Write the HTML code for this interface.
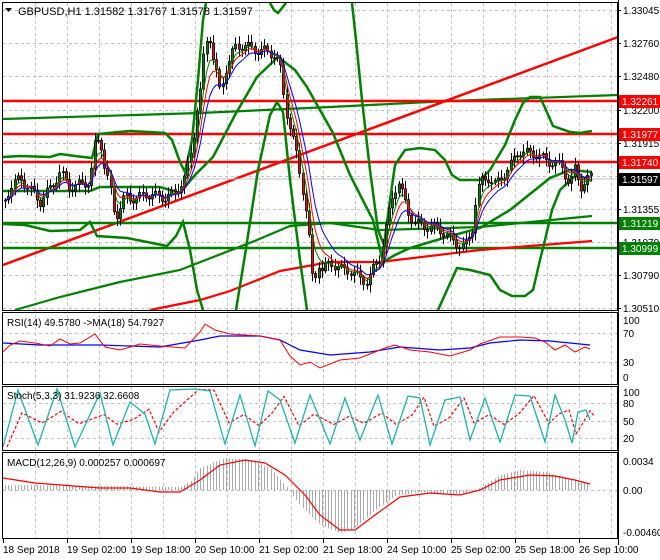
<!DOCTYPE html>
<html><head><meta charset="utf-8">
<style>
html,body{margin:0;padding:0;background:#fff;}
svg{display:block;font-family:"Liberation Sans",sans-serif;}
</style></head>
<body>
<div id="wrap"></div>
<script>
(function(){
var G='#008000',R='#ff0000';
var out=[];
function P(s){out.push(s);}
function f(n){return (Math.round(n*10)/10).toString();}
function pl(pts,c,w,extra){P('<polyline fill="none" stroke="'+c+'" stroke-width="'+w+'" '+(extra||'')+' points="'+pts.map(function(q){return f(q[0])+','+f(q[1]);}).join(' ')+'"/>');}
P('<svg width="660" height="560" viewBox="0 0 660 560" xmlns="http://www.w3.org/2000/svg"><rect width="660" height="560" fill="#fff"/>');
var gd='';
for(var gx=35;gx<618;gx+=32){gd+='M'+(gx+.5)+' 3V538';}
[10,43,76,110,143,176,209,242,275,308,333,362,403,421,438,490].forEach(function(y){gd+='M3 '+(y+.5)+'H617';});
P('<path d="'+gd+'" stroke="#c0c0c0" stroke-dasharray="3,3" stroke-width="1" fill="none"/>');
pl([[3,119],[200,113],[330,107],[450,101],[618,95]],G,2.2);
pl([[3,265],[618,37]],R,2.5);
[[101,R],[134,R],[162,R],[223,G],[248,G]].forEach(function(a){pl([[3,a[0]],[618,a[0]]],a[1],2.5);});
pl([[3,179],[618,179]],'#c0c0c0',1);
pl([[15,310],[60,297],[120,282],[180,270],[257,240],[290,226],[330,223],[380,230],[480,227],[592,216]],G,2.2);
pl([[150,310],[200,300],[230,291],[280,271],[330,262],[380,262],[480,250],[592,241]],R,2.2);
pl([[3,157],[20,156],[50,157],[60,154],[75,156],[92,158],[98,134],[130,131],[165,133],[172,140],[180,162],[185,172],[192,140],[198,80],[203,20],[206,3]],G,2.5);
pl([[270,3],[274,10],[278,13],[282,8],[286,3]],G,2.5);
pl([[352,3],[356,40],[362,100],[370,170],[378,230],[384,245],[390,200],[395,165],[405,150],[420,148],[435,150],[445,160],[452,175],[460,180],[480,180],[490,170],[505,145],[515,120],[523,103],[530,97],[540,97],[546,110],[553,126],[570,132],[580,133],[592,131]],G,2.5);
pl([[3,191],[90,191],[100,187],[160,187],[180,193],[195,175],[213,157],[235,115],[257,77],[278,57],[295,70],[307,87],[320,110],[333,133],[350,175],[373,220],[383,262],[395,255],[410,248],[447,237],[480,228],[510,210],[550,178],[570,170],[592,172]],G,2.5);
pl([[3,224],[25,225],[50,231],[80,230],[90,222],[97,236],[127,238],[167,246],[176,236],[183,222],[190,250],[197,290],[203,310]],G,2.5);
pl([[236,310],[245,255],[258,170],[270,115],[277,102],[283,112],[290,180],[300,260],[307,310]],G,2.5);
pl([[438,310],[447,290],[457,268],[470,270],[490,275],[500,290],[512,296],[525,296],[533,290],[540,260],[545,240],[552,210],[560,190],[575,176],[585,178],[592,181]],G,2.5);
var kp=[[5,200],[10,185],[20,175],[30,190],[40,205],[50,190],[60,170],[70,185],[80,185],[90,185],[95,145],[100,140],[105,170],[110,185],[115,215],[120,205],[125,195],[130,200],[140,200],[150,195],[160,195],[175,192],[185,180],[192,150],[197,110],[200,95],[205,40],[210,35],[213,55],[217,75],[220,92],[225,70],[230,60],[235,50],[245,48],[255,48],[265,48],[275,55],[280,70],[285,110],[290,130],[295,150],[300,175],[305,200],[310,245],[313,285],[318,260],[322,270],[330,265],[340,272],[350,270],[360,275],[368,280],[375,265],[380,260],[385,235],[392,200],[398,180],[403,195],[408,210],[415,220],[425,228],[440,232],[455,240],[465,245],[472,230],[476,200],[480,185],[488,180],[495,185],[505,170],[512,160],[518,150],[525,155],[535,157],[545,160],[555,160],[562,165],[570,185],[575,170],[580,190],[585,185],[590,178]];
function interp(x){for(var j=0;j<kp.length-1;j++){if(x>=kp[j][0]&&x<=kp[j+1][0]){var t=(x-kp[j][0])/(kp[j+1][0]-kp[j][0]);return kp[j][1]+t*(kp[j+1][1]-kp[j][1]);}}return kp[kp.length-1][1];}
var xs=[],closes=[];
for(var k=0;k<184;k++){var cx=5+k*3.2;xs.push(cx);closes.push(interp(cx)+Math.sin(k*1.3)*5+Math.sin(k*0.41)*3);}
var wick='',gb='',rb='';
for(var k=0;k<xs.length;k++){var o=(k==0?200:closes[k-1]),c=closes[k],bx=Math.round(xs[k]);
var bt=Math.min(o,c),bb=Math.max(o,c);
var hi=bt-2-Math.abs(Math.sin(k*2.3))*6,lo=bb+2+Math.abs(Math.cos(k*1.9))*6;
wick+='M'+(bx+.5)+' '+f(hi)+'V'+f(lo);
var h=Math.max(bb-bt,1);
var r='M'+(bx-.5)+' '+f(bt)+'h2v'+f(h)+'h-2z';
if(c<o)gb+=r;else rb+=r;}
P('<path d="'+wick+'" stroke="#000" stroke-width="1" fill="none"/>');
P('<path d="'+gb+'" fill="#008000" stroke="#000" stroke-width="0.8"/>');
P('<path d="'+rb+'" fill="#ff0000" stroke="#000" stroke-width="0.8"/>');
function ema(a,n){var kk=2/(n+1),r=[],v=a[0];for(var j=0;j<a.length;j++){v=a[j]*kk+v*(1-kk);r.push([xs[j],v]);}return r;}
pl(ema(closes,4),G,1);
pl(ema(closes,6),R,1);
pl(ema(closes,9),'#0000ff',1);
pl([[3,343],[40,345],[100,345],[160,347],[200,340],[220,336],[260,336],[280,340],[300,350],[330,355],[370,352],[400,347],[440,350],[470,348],[490,343],[520,340],[550,341],[590,345]],'#0000ff',1.2);
pl([[3,352],[10,345],[20,341],[35,343],[50,346],[60,339],[70,344],[80,343],[95,334],[105,347],[120,350],[140,344],[160,346],[185,348],[200,332],[205,324],[215,330],[230,334],[260,336],[280,340],[290,356],[300,365],[310,362],[320,368],[340,360],[360,358],[375,352],[385,348],[395,345],[410,350],[430,352],[450,356],[470,350],[480,344],[500,337],[520,337],[535,338],[545,342],[555,350],[565,345],[575,352],[585,347],[590,349]],R,1);
var st=[[3,447],[18,390],[38,445],[57,389],[75,447],[100,393],[113,445],[130,402],[145,414],[155,444],[170,390],[195,389],[210,391],[225,444],[240,395],[255,446],[268,391],[280,400],[295,443],[310,395],[330,444],[345,398],[360,440],[378,395],[392,444],[408,396],[420,398],[430,445],[445,400],[460,397],[470,440],[485,398],[500,442],[515,395],[530,396],[545,442],[555,395],[565,420],[572,443],[578,412],[586,410],[590,420]];
var sd=st.map(function(p,j){var q=st[Math.max(0,j-1)];return [p[0]+4,p[1]*0.6+q[1]*0.4];});
pl(sd,R,1.2,'stroke-dasharray="3,2"');
pl(st,'#20b2aa',1.3);
var hp=[[3,485],[100,486],[180,487],[190,482],[200,468],[225,458],[250,460],[270,468],[285,485],[300,505],[320,525],[340,533],[355,528],[375,510],[395,496],[420,492],[460,494],[480,488],[500,475],[520,470],[545,472],[565,478],[590,483]];
function hv(x){for(var j=0;j<hp.length-1;j++){if(x>=hp[j][0]&&x<=hp[j+1][0]){var t=(x-hp[j][0])/(hp[j+1][0]-hp[j][0]);return hp[j][1]+t*(hp[j+1][1]-hp[j][1]);}}return 490;}
var hs='';
for(var k=0;k<184;k++){var hx=5+k*3.2;hs+='M'+(Math.round(hx)+.5)+' 490V'+f(hv(hx));}
P('<path d="'+hs+'" stroke="#a9a9a9" stroke-width="1" fill="none"/>');
pl([[3,478],[35,483],[100,488],[130,488],[160,492],[180,492],[200,480],[220,465],[245,460],[265,463],[285,475],[305,495],[320,515],[340,530],[355,530],[375,515],[400,497],[430,493],[460,495],[480,490],[500,480],[530,475],[555,476],[575,480],[590,484]],R,1.2);
P('<g fill="none" stroke="#000" stroke-width="1"><rect x="2.5" y="2.5" width="615" height="308"/><rect x="2.5" y="312.5" width="615" height="72"/><rect x="2.5" y="386.5" width="615" height="64"/><rect x="2.5" y="452.5" width="615" height="86"/></g>');
P('<rect x="619" y="0" width="41" height="560" fill="#fff"/><rect x="0" y="539" width="660" height="21" fill="#fff"/>');
P('<g font-size="10" fill="#000">');
[['1.33045',10],['1.32760',43],['1.32480',76],['1.32200',110],['1.31915',143],['1.31635',176],['1.31355',209],['1.31070',242],['1.30790',275],['1.30510',308]].forEach(function(a){P('<path d="M618 '+(a[1]+.5)+'h3" stroke="#000"/><text x="623" y="'+(a[1]+4)+'">'+a[0]+'</text>');});
[['100',320],['70',333],['30',362],['0',377],['100',392],['80',403],['50',421],['20',438],['0.0034',461],['0.00',490],['-0.004603',532]].forEach(function(a){P('<text x="623" y="'+(a[1]+4)+'">'+a[0]+'</text>');});
[['1.32261',101,R],['1.31977',134,R],['1.31740',162,R],['1.31597',179,'#000'],['1.31219',223,G],['1.30999',248,G]].forEach(function(a){P('<rect x="619" y="'+(a[1]-6)+'" width="41" height="13" fill="'+a[2]+'"/><text x="622" y="'+(a[1]+4)+'" fill="#fff">'+a[0]+'</text>');});
['18 Sep 2018','19 Sep 02:00','19 Sep 18:00','20 Sep 10:00','21 Sep 02:00','21 Sep 18:00','24 Sep 10:00','25 Sep 02:00','25 Sep 18:00','26 Sep 10:00'].forEach(function(s,j){var x=3+j*64;P('<path d="M'+(x+.5)+' 539v4" stroke="#000"/><text x="'+x+'" y="553">'+s+'</text>');});
P('</g>');
P('<path d="M618.5 0V545" stroke="#000"/>');
P('<text x="18" y="15" font-size="11" fill="#000">GBPUSD,H1  1.31582 1.31767 1.31578 1.31597</text><polygon points="5,8 12,8 8.5,12" fill="#000"/>');
P('<text x="7" y="326" font-size="10">RSI(14) 49.5780  -&gt;MA(18) 54.7927</text><text x="7" y="399" font-size="10">Stoch(5,3,3) 31.9236 32.6608</text><text x="7" y="466" font-size="10">MACD(12,26,9) 0.000257 0.000697</text>');
P('</svg>');
document.getElementById('wrap').innerHTML=out.join('');
})();
</script>
</body></html>
